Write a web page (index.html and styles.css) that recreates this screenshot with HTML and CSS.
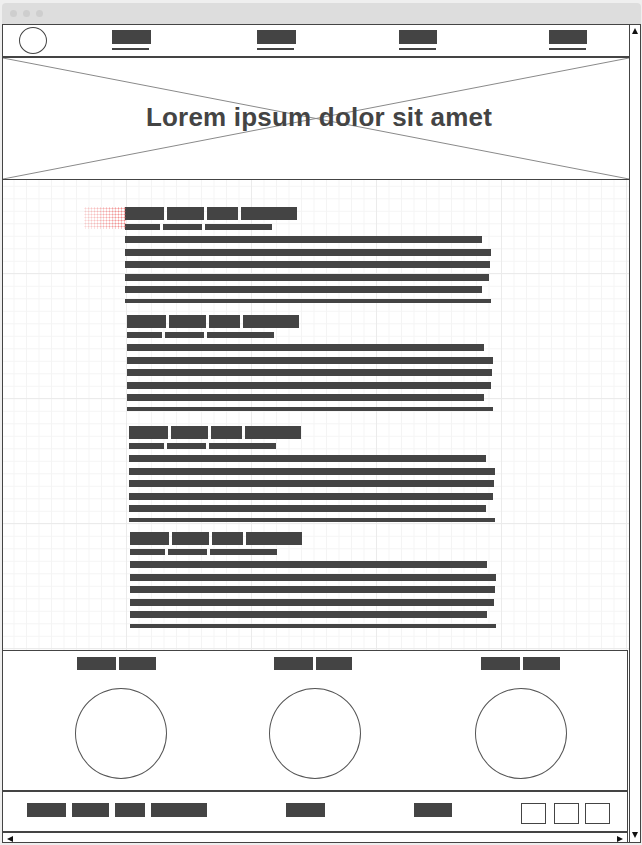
FILE: index.html
```html
<!DOCTYPE html>
<html lang="en">
<head>
<meta charset="utf-8">
<title>Wireframe</title>
<link rel="stylesheet" href="styles.css">
</head>
<body>
<div class="page">
  <div class="chrome">
    <span class="dot"></span><span class="dot"></span><span class="dot"></span>
  </div>
  <div class="frame">
    <div class="col">
      <nav class="nav">
        <div class="logo"></div>
        <div class="navitem n1"><div class="nb"></div><div class="nu"></div></div>
        <div class="navitem n2"><div class="nb"></div><div class="nu"></div></div>
        <div class="navitem n3"><div class="nb w38"></div><div class="nu"></div></div>
        <div class="navitem n4"><div class="nb w38"></div><div class="nu"></div></div>
      </nav>
      <header class="banner">
        <svg class="xlines" viewBox="0 0 100 100" preserveAspectRatio="none" aria-hidden="true">
          <line x1="0" y1="0" x2="100" y2="100" vector-effect="non-scaling-stroke"/>
          <line x1="0" y1="100" x2="100" y2="0" vector-effect="non-scaling-stroke"/>
        </svg>
        <h1 class="title">Lorem ipsum dolor sit amet</h1>
      </header>
      <main class="main">
        <article class="block b1">
          <div class="trow"><span class="t1"></span><span class="t2"></span><span class="t3"></span><span class="t4"></span></div>
          <div class="srow"><span class="s1"></span><span class="s2"></span><span class="s3"></span></div>
          <div class="ln l1"></div><div class="ln l2"></div><div class="ln l3"></div><div class="ln l4"></div><div class="ln l5"></div><div class="ln l6"></div>
        </article>
        <article class="block b2">
          <div class="trow"><span class="t1"></span><span class="t2"></span><span class="t3"></span><span class="t4"></span></div>
          <div class="srow"><span class="s1"></span><span class="s2"></span><span class="s3"></span></div>
          <div class="ln l1"></div><div class="ln l2"></div><div class="ln l3"></div><div class="ln l4"></div><div class="ln l5"></div><div class="ln l6"></div>
        </article>
        <article class="block b3">
          <div class="trow"><span class="t1"></span><span class="t2"></span><span class="t3"></span><span class="t4"></span></div>
          <div class="srow"><span class="s1"></span><span class="s2"></span><span class="s3"></span></div>
          <div class="ln l1"></div><div class="ln l2"></div><div class="ln l3"></div><div class="ln l4"></div><div class="ln l5"></div><div class="ln l6"></div>
        </article>
        <article class="block b4">
          <div class="trow"><span class="t1"></span><span class="t2"></span><span class="t3"></span><span class="t4"></span></div>
          <div class="srow"><span class="s1"></span><span class="s2"></span><span class="s3"></span></div>
          <div class="ln l1"></div><div class="ln l2"></div><div class="ln l3"></div><div class="ln l4"></div><div class="ln l5"></div><div class="ln l6"></div>
        </article>
      </main>
      <section class="features">
        <div class="feat f1">
          <div class="labels"><span class="la"></span><span class="lb"></span></div>
          <div class="circle"></div>
        </div>
        <div class="feat f2">
          <div class="labels"><span class="la"></span><span class="lb w36"></span></div>
          <div class="circle"></div>
        </div>
        <div class="feat f3">
          <div class="labels"><span class="la"></span><span class="lb"></span></div>
          <div class="circle"></div>
        </div>
      </section>
      <footer class="footer">
        <div class="fgroup">
          <span class="fb w39"></span><span class="fb w37"></span><span class="fb w30"></span><span class="fb w56"></span>
        </div>
        <span class="fb w39 fm1"></span>
        <span class="fb w38 fm2"></span>
        <span class="fbox fx1"></span>
        <span class="fbox fx2"></span>
        <span class="fbox fx3"></span>
      </footer>
      <div class="hscroll">
        <svg class="arrow" viewBox="0 0 6 6" aria-hidden="true"><polygon points="0,3 6,0 6,6"/></svg>
        <svg class="arrow" viewBox="0 0 6 6" aria-hidden="true"><polygon points="0,0 6,3 0,6"/></svg>
      </div>
    </div>
    <div class="vscroll">
      <svg class="arrow up" viewBox="0 0 6 6" aria-hidden="true"><polygon points="3,0 6,6 0,6"/></svg>
      <svg class="arrow down" viewBox="0 0 6 6" aria-hidden="true"><polygon points="0,0 6,0 3,6"/></svg>
    </div>
  </div>
</div>
</body>
</html>
```
FILE: styles.css
```css
* { box-sizing: border-box; }
html, body { margin: 0; padding: 0; }
body {
  background: #efefef;
  font-family: "Liberation Sans", Arial, sans-serif;
  width: 642px;
  height: 845px;
  overflow: hidden;
}
.page { padding: 3px 1px 0 2px; }

.chrome {
  height: 21px;
  background: #dddddd;
  border-radius: 4px 4px 0 0;
  display: flex;
  align-items: center;
  gap: 6px;
  padding-left: 8px;
}
.dot {
  width: 7px;
  height: 7px;
  border-radius: 50%;
  background: #cecece;
}

.frame {
  width: 639px;
  height: 819px;
  border: 1px solid #444;
  background: #fff;
  display: flex;
}
.col {
  flex: 1;
  min-width: 0;
  display: flex;
  flex-direction: column;
}
.vscroll {
  width: 11px;
  border-left: 1px solid #444;
  display: flex;
  flex-direction: column;
  justify-content: space-between;
  padding: 3px 0 4px 2px;
}
.arrow { width: 6px; height: 6px; display: block; fill: #111; }

/* nav */
.nav {
  height: 32px;
  border-bottom: 1px solid #444;
  display: flex;
  align-items: flex-start;
}
.logo {
  width: 28px;
  height: 27px;
  border: 1px solid #444;
  border-radius: 50%;
  margin: 2px 0 0 16px;
}
.navitem { margin-top: 5px; display: flex; flex-direction: column; }
.n1 { margin-left: 65px; }
.n2 { margin-left: 106px; }
.n3 { margin-left: 103px; }
.n4 { margin-left: 112px; }
.nb { width: 39px; height: 14px; background: #444; }
.nb.w38 { width: 38px; }
.nu { width: 37px; height: 2px; margin-top: 4px; background: #444; }

/* banner */
.banner {
  position: relative;
  height: 123px;
  border-top: 1px solid #444;
  border-bottom: 1px solid #444;
  display: flex;
  align-items: center;
  justify-content: center;
  padding-left: 6px;
  padding-bottom: 2px;
}
.xlines {
  position: absolute;
  left: 0; top: 0;
  width: 100%; height: 100%;
}
.xlines line { stroke: #8a8a8a; stroke-width: 1; }
.title {
  position: relative;
  margin: 0;
  font-size: 26px;
  font-weight: bold;
  color: #444;
  letter-spacing: 0.2px;
}

/* main with grid */
.main {
  height: 470px;
  padding-top: 27px;
  background-color: #fff;
  background-image:
    linear-gradient(to right, #ebebeb 1px, transparent 1px),
    linear-gradient(to bottom, #ebebeb 1px, transparent 1px),
    linear-gradient(to right, #f4f4f4 1px, transparent 1px),
    linear-gradient(to bottom, #f4f4f4 1px, transparent 1px);
  background-size: 125px 125px, 125px 125px, 12.5px 12.5px, 12.5px 12.5px;
  background-position: 123px 93px, 123px 93px, 10.5px 5.8px, 10.5px 5.8px;
  display: flex;
  flex-direction: column;
  align-items: flex-start;
}
.block { position: relative; display: flex; flex-direction: column; align-items: flex-start; }
.b1 { margin-left: 122px; }
.b2 { margin-left: 124px; margin-top: 12px; }
.b3 { margin-left: 126px; margin-top: 15px; }
.b4 { margin-left: 127px; margin-top: 10px; }
.b1::before {
  content: "";
  position: absolute;
  left: -41px;
  top: 0;
  width: 42px;
  height: 22px;
  background-image: radial-gradient(circle, rgba(236, 90, 90, 0.9) 0.8px, transparent 1.2px);
  background-size: 3px 3px;
  -webkit-mask-image: linear-gradient(to right, rgba(0,0,0,0.35), #000);
  mask-image: linear-gradient(to right, rgba(0,0,0,0.35), #000);
  opacity: 0.8;
}
.trow, .srow { display: flex; gap: 3px; }
.trow span { height: 13px; background: #444; }
.t1 { width: 39px; } .t2 { width: 37px; } .t3 { width: 31px; } .t4 { width: 56px; }
.srow { margin-top: 4px; }
.srow span { height: 6px; background: #444; }
.s1 { width: 35px; } .s2 { width: 39px; } .s3 { width: 67px; }
.ln { height: 7px; background: #444; }
.l1 { width: 357px; margin-top: 6px; }
.l2 { width: 366px; margin-top: 6px; }
.l3 { width: 365px; margin-top: 5px; }
.l4 { width: 364px; margin-top: 6px; }
.l5 { width: 357px; margin-top: 5px; }
.l6 { width: 366px; margin-top: 6px; height: 4px; }

/* features */
.features {
  height: 141px;
  margin-right: 1px;
  border-top: 1px solid #444;
  border-right: 1px solid #444;
  border-bottom: 1px solid #444;
  display: flex;
  align-items: flex-start;
  padding: 6px 0 0 72px;
}
.feat { display: flex; flex-direction: column; width: 92px; }
.f2 { margin-left: 102px; }
.f3 { margin-left: 114px; }
.labels { display: flex; gap: 3px; }
.f1 .labels { margin-left: 2px; }
.f2 .labels { margin-left: 5px; }
.f3 .labels { margin-left: 6px; }
.labels span { height: 13px; background: #444; }
.la { width: 39px; } .lb { width: 37px; } .lb.w36 { width: 36px; }
.circle {
  margin-top: 18px;
  width: 92px;
  height: 91px;
  border: 1px solid #555;
  border-radius: 50%;
}

/* footer */
.footer {
  height: 41px;
  margin-right: 1px;
  border-top: 1px solid #444;
  border-right: 1px solid #444;
  border-bottom: 1px solid #444;
  display: flex;
  align-items: flex-start;
  padding: 11px 0 0 24px;
}
.fgroup { display: flex; gap: 6px; }
.fb { display: block; height: 14px; background: #444; }
.w39 { width: 39px; } .w37 { width: 37px; } .w30 { width: 30px; } .w56 { width: 56px; } .w38 { width: 38px; }
.fm1 { margin-left: 79px; }
.fm2 { margin-left: 89px; }
.fbox { display: block; width: 25px; height: 21px; border: 1px solid #444; }
.fx1 { margin-left: 69px; }
.fx2 { margin-left: 8px; }
.fx3 { margin-left: 6px; }

/* horizontal scrollbar */
.hscroll {
  height: 10px;
  margin-right: 1px;
  border-top: 1px solid #444;
  border-right: 1px solid #444;
  display: flex;
  justify-content: space-between;
  align-items: flex-end;
  padding: 0 4px 0 4px;
}
```
